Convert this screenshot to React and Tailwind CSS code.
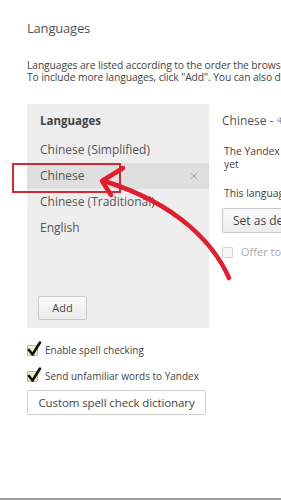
import { X } from "lucide-react";

const langs = ["Chinese (Simplified)", "Chinese", "Chinese (Traditional)", "English"];

const Check = ({ on }) => (
  <span className="relative w-[11px] h-[11px] shrink-0 border border-[#b9b9a0] bg-[#f3eec8] rounded-[1px]">
    {on && (
      <svg className="absolute -left-[1px] -top-[5px]" width="15" height="16" viewBox="0 0 15 16">
        <path d="M2 9 L5.5 13.5 L13 1.5" fill="none" stroke="#111" strokeWidth="2.6" strokeLinecap="round" strokeLinejoin="round" />
      </svg>
    )}
  </span>
);

const App = () => {
  return (
    <div className="relative w-[281px] h-[500px] overflow-hidden bg-white border-b-2 border-[#9a9a9a] font-['Open_Sans',sans-serif] text-[#555]">
      <div className="pl-[27px] pt-[19px]">
        <h1 className="text-[13px] leading-[18px] text-[#555] tracking-[-0.2px]">Languages</h1>

        <div className="mt-[22px] text-[10.3px] leading-[12px] text-[#444] whitespace-nowrap tracking-[-0.1px]">
          <p>Languages are listed according to the order the browser uses them to display pages.</p>
          <p>To include more languages, click "Add". You can also drag them to change the order.</p>
        </div>

        <div className="mt-[21px] flex gap-[13px] whitespace-nowrap">
          <div className="w-[182px] h-[224px] shrink-0 bg-[#eeeeee] flex flex-col">
            <div className="mt-[7px] h-[20px] pl-[13px] text-[11.5px] font-bold leading-[20px] text-[#444]">Languages</div>
            <div className="mt-[6px]">
              {langs.map((l, i) => (
                <div
                  key={l}
                  className={
                    i === 1
                      ? "h-[26px] pl-[13px] pr-[10px] flex items-center justify-between bg-[#dfdfdf] text-[12px] text-[#555]"
                      : "h-[26px] pl-[13px] pr-[10px] flex items-center text-[12px] text-[#555]"
                  }
                >
                  <span>{l}</span>
                  {i === 1 && <X className="w-[10px] h-[10px] text-[#999]" strokeWidth={2} />}
                </div>
              ))}
            </div>
            <div className="mt-auto mb-[8px] ml-[11px]">
              <button className="w-[49px] h-[24px] border border-[#c8c8c8] rounded-[2px] bg-gradient-to-b from-[#fafafa] to-[#ececec] text-[11px] text-[#444]">
                Add
              </button>
            </div>
          </div>

          <div className="w-[260px] shrink-0 pt-[8px]">
            <div className="h-[17px] text-[12px] leading-[17px] text-[#555]">
              Chinese - <span className="text-[7px] align-top">中文</span>
            </div>
            <div className="mt-[16px] pl-[2px] text-[10.3px] leading-[13px] text-[#444]">
              <p>The Yandex browser can't be displayed in this language</p>
              <p>yet</p>
            </div>
            <div className="mt-[16px] pl-[2px] text-[10.3px] leading-[13px] text-[#444]">
              This language is used for spell checking
            </div>
            <button className="mt-[8px] h-[25px] px-[10px] border border-[#c8c8c8] rounded-[2px] bg-gradient-to-b from-[#fafafa] to-[#ececec] text-[12px] text-[#444]">
              Set as default
            </button>
            <div className="mt-[11px] flex items-center gap-[8px] text-[11px] text-[#aaa]">
              <span className="w-[11px] h-[11px] border border-[#d4d4d4] bg-[#f7f7f7] rounded-[1px]" />
              <span>Offer to translate pages in this language</span>
            </div>
          </div>
        </div>

        <div className="mt-[9px] flex flex-col">
          <label className="h-[26px] flex items-center gap-[7px] text-[10px] text-[#444]">
            <Check on />
            <span>Enable spell checking</span>
          </label>
          <label className="h-[26px] flex items-center gap-[7px] text-[10px] text-[#444]">
            <Check on />
            <span>Send unfamiliar words to Yandex</span>
          </label>
          <div>
            <button className="w-[179px] h-[25px] border border-[#d0d0d0] rounded-[2px] bg-white text-[11.5px] text-[#444] tracking-[-0.1px]">
              Custom spell check dictionary
            </button>
          </div>
        </div>
      </div>

      {/* annotation overlay */}
      <div className="absolute left-[12px] top-[163px] w-[109px] h-[30px] border-2 border-[#d42a35]" />
      <svg className="absolute left-0 top-0 pointer-events-none" width="281" height="500" viewBox="0 0 281 500">
        <path d="M229 278 C 214 244, 178 204, 104 181" fill="none" stroke="#e11d2e" strokeWidth="4.5" strokeLinecap="round" />
        <path d="M123 168 L102 181 L111 195" fill="none" stroke="#e11d2e" strokeWidth="4.5" strokeLinecap="round" strokeLinejoin="round" />
      </svg>
    </div>
  );
};

export default App;
